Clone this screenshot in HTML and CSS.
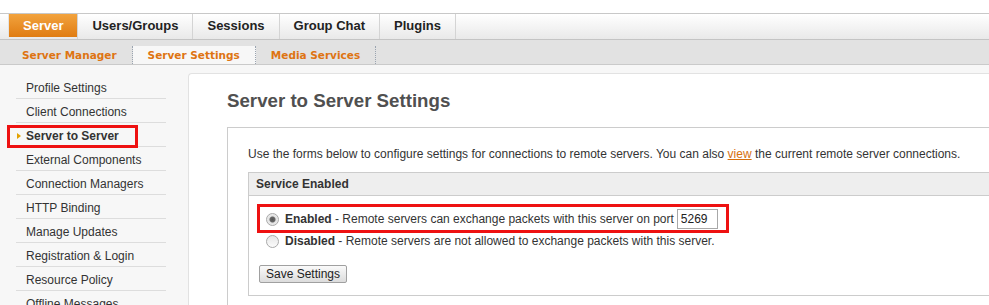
FILE: index.html
```html
<!DOCTYPE html>
<html lang="en">
<head>
  <meta charset="UTF-8" />
  <title>Server to Server Settings</title>
  <link rel="stylesheet" href="styles.css">
</head>
<body>

  <div class="header"></div>

  <ul class="tabs">
    <li class="active">Server</li>
    <li>Users/Groups</li>
    <li>Sessions</li>
    <li>Group Chat</li>
    <li>Plugins</li>
  </ul>

  <ul class="subnav">
    <li>Server Manager</li>
    <li class="active">Server Settings</li>
    <li>Media Services</li>
  </ul>

  <div class="main">
    <ul class="sidebar">
      <li>Profile Settings</li>
      <li>Client Connections</li>
      <li class="current">Server to Server<span class="mark side-mark"></span></li>
      <li>External Components</li>
      <li>Connection Managers</li>
      <li>HTTP Binding</li>
      <li>Manage Updates</li>
      <li>Registration &amp; Login</li>
      <li>Resource Policy</li>
      <li>Offline Messages</li>
    </ul>

    <div class="content">
      <h1>Server to Server Settings</h1>

      <div class="box">
        <p class="intro">Use the forms below to configure settings for connections to remote servers. You can also <a href="#">view</a> the current remote server connections.</p>

        <div class="panel">
          <div class="panel-head">Service Enabled</div>
          <div class="panel-body">
            <label class="option">
              <input type="radio" name="s2s" checked>
              <span><b>Enabled</b> - Remote servers can exchange packets with this server on port</span>
              <input class="port" type="text" value="5269">
              <span class="mark row-mark"></span>
            </label>
            <label class="option">
              <input type="radio" name="s2s">
              <span><b>Disabled</b> - Remote servers are not allowed to exchange packets with this server.</span>
            </label>
            <button class="save">Save Settings</button>
          </div>
        </div>
      </div>
    </div>
  </div>

</body>
</html>
```

FILE: styles.css
```css
* {
  box-sizing: border-box;
  margin: 0;
  padding: 0;
}

html, body {
  overflow: hidden;
}

body {
  background: #f7f7f7;
  font-family: 'Liberation Sans', Arial, sans-serif;
  font-size: 12px;
  color: #333;
  width: 989px;
  height: 305px;
}

ul {
  list-style: none;
}

.header {
  height: 13px;
  background: #fff;
}

/* main tabs */
.tabs {
  display: flex;
  height: 27px;
  padding-left: 8px;
  border-top: 1px solid #c8c8c8;
  border-bottom: 1px solid #c4c4c4;
  background: linear-gradient(to bottom, #ffffff, #e9e9e9);
}

.tabs li {
  padding: 0 14px;
  border-left: 1px solid #d4d4d4;
  line-height: 23px;
  font-size: 13px;
  font-weight: bold;
  color: #222;
}

.tabs li:last-child {
  border-right: 1px solid #d4d4d4;
}

.tabs li.active {
  height: 23px;
  color: #fff;
  border-left: 1px solid #e4e4e4;
  background: linear-gradient(to bottom, #f2a33e, #e07c12);
}

/* sub navigation */
.subnav {
  display: flex;
  align-items: flex-end;
  height: 25px;
  padding-left: 7px;
  background: #e2e2e2;
  border-bottom: 1px solid #cacaca;
}

.subnav li {
  height: 18px;
  padding: 0 15px;
  line-height: 19px;
  font-family: 'DejaVu Sans', Verdana, sans-serif;
  font-size: 10.5px;
  font-weight: bold;
  color: #de7412;
  border-right: 1px dotted #9aa4b0;
}

.subnav li.active {
  background: #f7f7f7;
}

/* layout */
.main {
  display: flex;
  align-items: flex-start;
}

.sidebar {
  width: 188px;
  flex: none;
  padding: 10px 0 0 16px;
}

.sidebar li {
  position: relative;
  width: 150px;
  height: 24px;
  padding: 1px 0 0 10px;
  line-height: 24px;
  border-bottom: 1px solid #dddddd;
  color: #333;
}

.sidebar li.current {
  font-weight: bold;
}

.sidebar li.current::before {
  content: "";
  position: absolute;
  left: 1px;
  top: 10px;
  border-left: 4px solid #e3a100;
  border-top: 3.5px solid transparent;
  border-bottom: 3.5px solid transparent;
}

.mark {
  position: absolute;
  border: 3px solid #ee1111;
  pointer-events: none;
}

.side-mark {
  left: -9px;
  top: 2px;
  width: 131px;
  height: 23px;
}

.content {
  flex: none;
  width: 860px;
  margin-top: 8px;
  min-height: 240px;
  padding: 16px 0 0 38px;
  background: #fff;
  border-top: 1px solid #e2e2e2;
  border-left: 1px solid #e2e2e2;
  border-top-left-radius: 4px;
}

h1 {
  font-size: 18.7px;
  color: #505050;
  line-height: 22px;
  margin-bottom: 15px;
}

.box {
  border: 1px solid #cccccc;
  border-right: none;
  padding: 19px 0 0 20px;
  min-height: 200px;
}

.intro {
  line-height: 14px;
  margin-bottom: 11px;
}

.intro a {
  color: #d7700f;
}

.panel {
  border: 1px solid #cccccc;
  border-right: none;
}

.panel-head {
  height: 23px;
  line-height: 23px;
  padding-left: 7px;
  background: #eeeeee;
  border-bottom: 1px solid #cccccc;
  font-weight: bold;
}

.panel-body {
  padding: 12px 0 12px 10px;
}

.option {
  position: relative;
  display: flex;
  align-items: center;
  height: 22px;
  padding-left: 7px;
}

.option input[type="radio"] {
  appearance: none;
  width: 13px;
  height: 13px;
  margin: 0 6px 0 0;
  border: 1px solid #a9a9a9;
  border-radius: 50%;
  background: linear-gradient(to bottom, #e6e6e6, #fbfbfb);
}

.option input[type="radio"]:checked {
  background: radial-gradient(circle, #555 0, #666 2.5px, #e2e2e2 3.5px, #f6f6f6 100%);
}

.port {
  width: 41px;
  height: 20px;
  margin-left: 3px;
  padding: 0 3px;
  border: 1px solid #a8a8a8;
  font-family: 'Liberation Sans', Arial, sans-serif;
  font-size: 12px;
  color: #222;
}

.row-mark {
  left: -2px;
  top: -4px;
  width: 472px;
  height: 29px;
}

.save {
  display: block;
  margin-top: 13px;
  height: 18px;
  padding: 0 6px;
  font-family: 'Liberation Sans', Arial, sans-serif;
  font-size: 12px;
  color: #222;
  border: 1px solid #a0a0a0;
  border-radius: 2px;
  background: linear-gradient(to bottom, #fafafa, #dcdcdc);
}
```
